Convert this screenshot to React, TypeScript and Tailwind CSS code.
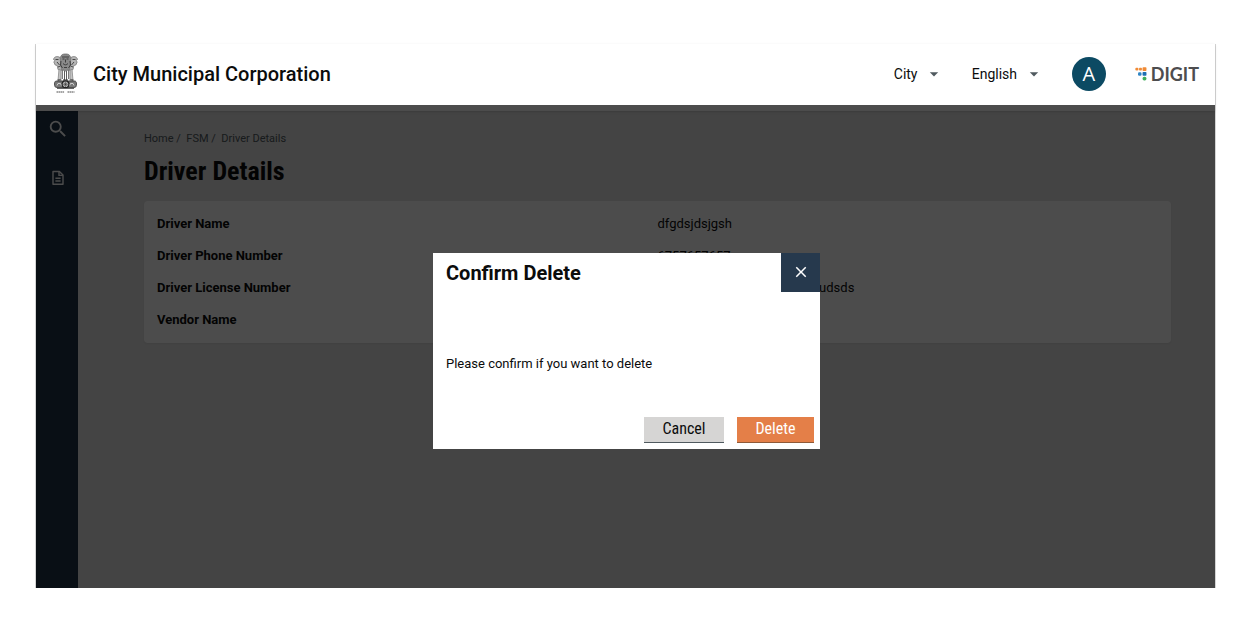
import React, { useState } from "react";
import { MdArrowDropDown, MdClose, MdSearch } from "react-icons/md";

interface Detail {
  label: string;
  value: string;
}

const details: Detail[] = [
  { label: "Driver Name", value: "dfgdsjdsjgsh" },
  { label: "Driver Phone Number", value: "6757657657" },
  { label: "Driver License Number", value: "dsjhdsjdsgdsjhgdsjhdsjhsdfudsds" },
  { label: "Vendor Name", value: "NA" },
];

export default function App() {
  const [open, setOpen] = useState(true);

  return (
    <div className="min-h-screen bg-white pt-11 pr-[33px] pb-[34px] pl-[35px] font-['Roboto',sans-serif] text-[#0b0c0c]">
      <div className="relative flex min-h-[544px] flex-col border-x border-[#d4d4d4]">
        <Header />
        <div className="flex flex-1">
          <Sidebar />
          <main className="flex-1 bg-[#e3e3e3] pt-5 pr-11 pl-[66px]">
            <nav className="text-[11px] leading-4 text-[#505a5f]">
              <a href="#home">Home</a> /&nbsp; <a href="#fsm">FSM</a> /&nbsp;{" "}
              <span>Driver Details</span>
            </nav>
            <h1 className="mt-2 font-['Roboto_Condensed','Liberation_Sans_Narrow',sans-serif] text-[26px] leading-8 font-bold">
              Driver Details
            </h1>
            <dl className="mt-3.5 rounded bg-white px-[13px] py-[7px] text-[13px] leading-8 shadow-xs">
              {details.map((detail) => (
                <div key={detail.label} className="flex">
                  <dt className="w-1/2 font-bold">{detail.label}</dt>
                  <dd className="w-1/2">{detail.value}</dd>
                </div>
              ))}
            </dl>
          </main>
        </div>
        {open && <ConfirmDelete onClose={() => setOpen(false)} />}
      </div>
    </div>
  );
}

function Header() {
  return (
    <header className="relative flex h-[67px] items-center bg-white pr-4 pb-2 pl-4 shadow-sm">
      <Emblem />
      <span className="ml-3.5 text-xl font-medium">City Municipal Corporation</span>
      <div className="ml-auto flex items-center">
        <Picker label="City" />
        <Picker label="English" />
        <button className="ml-7 h-[34px] w-[34px] rounded-full bg-[#0c4a63] font-['Open_Sans',sans-serif] text-xl text-white">
          A
        </button>
        <DigitLogo />
      </div>
    </header>
  );
}

function Picker({ label }: { label: string }) {
  return (
    <div className="relative ml-7 text-sm">
      <select aria-label={label} className="appearance-none bg-transparent pr-[26px]">
        <option>{label}</option>
      </select>
      <MdArrowDropDown className="pointer-events-none absolute top-0 right-0 h-5 w-5 text-[#505a5f]" />
    </div>
  );
}

function Sidebar() {
  return (
    <aside className="flex w-[42px] flex-col items-center bg-[#1f3447] pt-[7px] pl-0.5 text-white">
      <button aria-label="Search">
        <MdSearch className="h-[22px] w-[22px]" />
      </button>
      <button aria-label="Documents" className="mt-[30px]">
        <DocumentIcon />
      </button>
    </aside>
  );
}

function ConfirmDelete({ onClose }: { onClose: () => void }) {
  return (
    <div className="absolute inset-x-0 top-[61px] bottom-0 flex items-center justify-center bg-black/70 pt-2 pl-0.5">
      <div role="dialog" aria-label="Confirm Delete" className="w-[387px] bg-white">
        <div className="flex justify-between pl-[13px]">
          <h2 className="pt-1 text-xl leading-8 font-bold">Confirm Delete</h2>
          <button
            aria-label="Close"
            className="flex h-[39px] w-[39px] items-center justify-center bg-[#26394d] text-white"
            onClick={onClose}
          >
            <MdClose className="h-[18px] w-[18px]" />
          </button>
        </div>
        <p className="px-[13px] pt-[62px] text-[13px] leading-5">Please confirm if you want to delete</p>
        <div className="flex justify-end gap-[13px] px-1.5 pt-[43px] pb-1.5 font-['Roboto_Condensed','Liberation_Sans_Narrow',sans-serif] text-base">
          <button
            className="h-[26px] w-20 border-b border-[#505a5f] bg-[#d6d5d4] leading-6"
            onClick={onClose}
          >
            Cancel
          </button>
          <button
            className="h-[26px] w-[77px] border-b border-[#8f5a38] bg-[#e47f48] leading-6 text-white"
            onClick={onClose}
          >
            Delete
          </button>
        </div>
      </div>
    </div>
  );
}

const DigitLogo = () => {
  return (
    <div className="ml-[29px] flex items-center gap-1 font-['Lato',sans-serif] text-lg leading-5 font-bold text-[#4d4d4f]">
      <svg width="12" height="14" viewBox="0 0 11 13.600">
        <rect x="0" y="0.8" width="3" height="2.6" rx="1" fill="#f08a35" />
        <rect x="3.6" y="0.8" width="2.8" height="2.6" rx="0.8" fill="#f08a35" />
        <rect x="7" y="0.2" width="3.8" height="3.8" rx="0.8" fill="#f08a35" />
        <rect x="2.6" y="5.2" width="3.4" height="3.2" rx="1.2" fill="#2f86c5" />
        <rect x="7" y="4.9" width="3.8" height="3.6" rx="0.8" fill="#1f6fb2" />
        <rect x="7" y="9.5" width="3.8" height="3.6" rx="1.6" fill="#3fae5a" />
      </svg>
      DIGIT
    </div>
  );
};

const DocumentIcon = () => {
  return (
    <svg width="12" height="16" viewBox="0 0 12 16" fill="none" stroke="currentColor" strokeWidth="1.4">
      <path d="M1 1.5h6.4L11 5v9.3H1z" strokeLinejoin="round" />
      <path d="M7 1.5V5.4h4M3.4 8.2h5.2M3.4 11h5.2" />
    </svg>
  );
};

const Emblem = () => {
  return (
    <svg width="27" height="42" viewBox="0 0 27 42" fill="none" stroke="#333" strokeWidth="0.8">
      {/* lion heads */}
      <path d="M8.5 4.5C9 1.500 11 1 13.500 1S18 1.500 18.500 4.500l1.500 5-1.500 6.500-5 2-5-2L7 9.500z" fill="#8a8a8a" stroke="#666" />
      <path d="M8 4.500C5 2.500 1.800 4 1.500 6.500l1.500 1-1.200 1.500 1.400 3 2 .5.8 4 3.500 1z" fill="#b5b5b5" stroke="#777" />
      <path d="M19 4.500c3-2 6.200-.5 6.500 2l-1.500 1 1.200 1.500-1.400 3-2 .5-.8 4-3.500 1z" fill="#b5b5b5" stroke="#777" />
      <path d="M10 4h7M10.500 6h2M14.500 6h2M13.500 6.500v3M11 10.500c1.500 1.800 3.500 1.800 5 0M9 8l-.5 4 2 3M18 8l.5 4-2 3M3.500 6.500h3M20.500 6.500h3M5 9l2.500 3M22 9l-2.500 3M6 14l2.500-1M21 14l-2.500-1M12 14.500h3" stroke="#2b2b2b" />
      {/* legs, the light gaps between them stay open */}
      <path d="M7 16l2 1.500v8.500l-3 1.500zM20 16l-2 1.500v8.500l3 1.500z" fill="#c4c4c4" stroke="#888" />
      <path d="M10.300 17v9M12.500 18v9M14.500 18v9M16.700 17v9" stroke="#5c5c5c" strokeWidth="1" />
      <path d="M5.500 27h4M11 27h5M17.500 27h4" stroke="#333" strokeWidth="1.200" />
      {/* abacus */}
      <path d="M4.500 28h18c1.500 0 2 1.200 2 3s-.5 3.500-2 3.500h-18c-1.500 0-2-1.700-2-3.500s.5-3 2-3z" fill="#777" stroke="#333" />
      <circle cx="13.500" cy="31.200" r="3.400" fill="#bbb" stroke="#222" strokeWidth="1.200" />
      <path d="M13.500 28.500v5.600M10.700 31.300h5.600M11.500 29.300l4 4M15.500 29.300l-4 4" strokeWidth="0.500" />
      <path d="M5 32.500l1-2h2.500l.8 2M17.700 32.500l.8-2H21l1 2" stroke="#e5e5e5" />
      <path d="M5 35.500h17" stroke="#555" strokeWidth="0.900" />
      <path d="M4.500 39h8M15.500 39h7" stroke="#888" strokeWidth="1.300" strokeDasharray="1.600 0.400" />
    </svg>
  );
};
